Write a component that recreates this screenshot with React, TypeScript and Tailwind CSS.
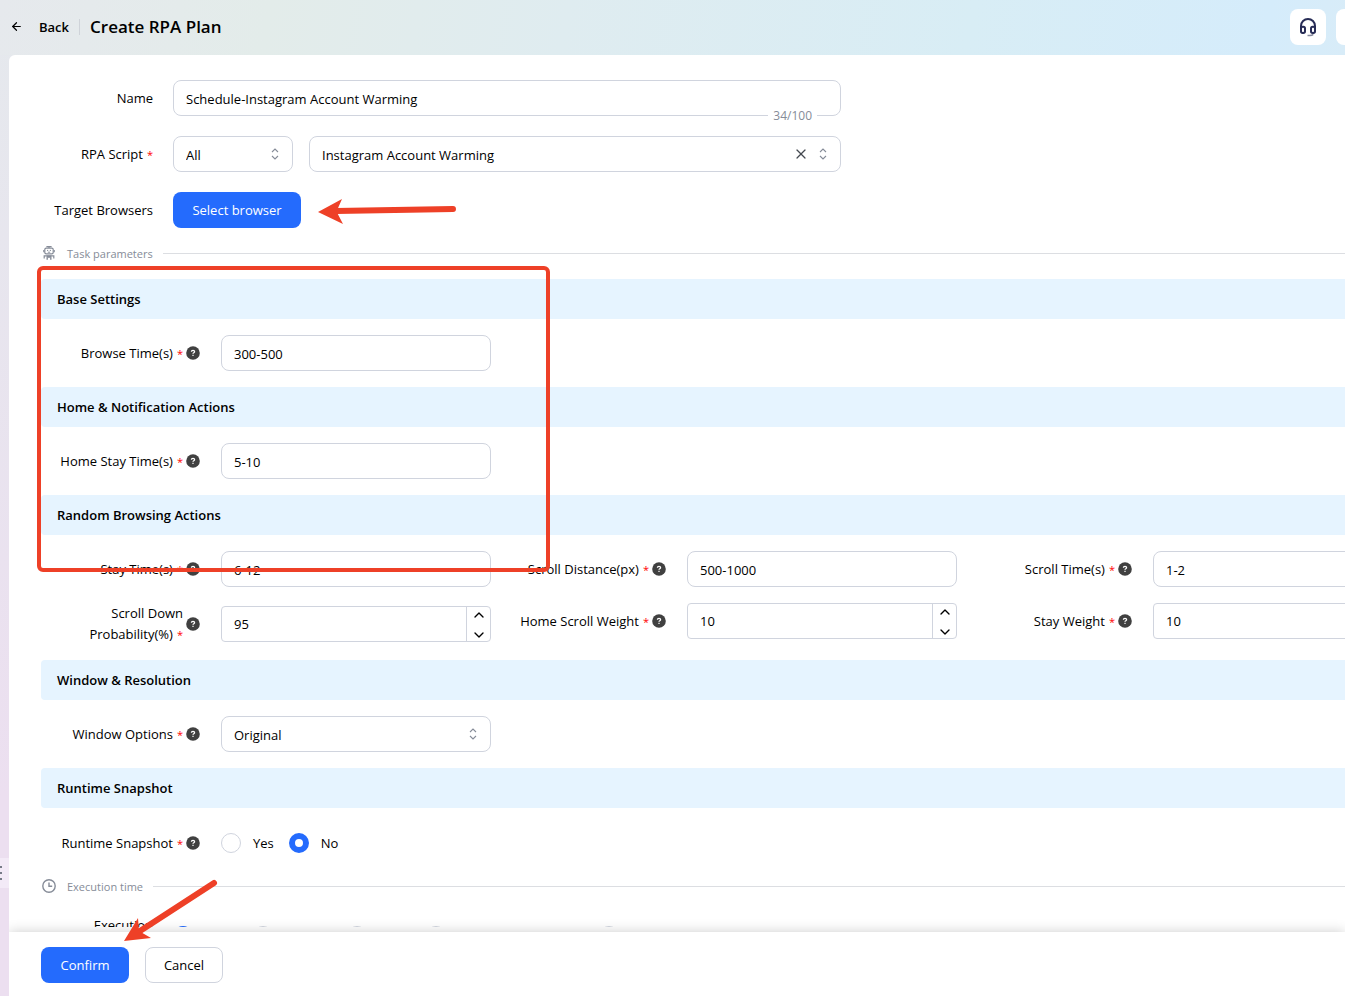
import { useState, type ReactNode } from 'react';
import { ArrowLeft, ChevronDown, ChevronUp, X } from 'lucide-react';

const inputClass =
  'h-9 rounded-lg border border-[#d0d4de] bg-white px-3 pt-px text-[13px] text-black outline-none focus:border-[#246bfd]';

function RobotIcon() {
  return (
    <svg viewBox="0 0 12 14" className="w-3 h-3.5" fill="none" stroke="#868c98" strokeWidth="1.2">
      <rect x="1.8" y="2.2" width="8.4" height="5.6" rx="1.4" />
      <path d="M6 2V.6M3.400.700h5.200M.800 4v2.200M11.200 4v2.200" />
      <path d="M4 4.400h1.200M6.800 4.400H8M4.800 6.200h2.400" strokeWidth="1" />
      <path d="M1.200 12.600V9.800h9.600v2.800" />
      <path d="M3.600 9.500h4.800v2.300H3.600z" fill="#868c98" stroke="none" />
      <path d="M4.200 11.500v2.300M7.800 11.500v2.300" strokeWidth="1.400" />
    </svg>
  );
}

function ClockIcon() {
  return (
    <svg viewBox="0 0 14 14" className="size-3.5" fill="none" stroke="#868c98" strokeWidth="1.4">
      <circle cx="7" cy="7" r="6.2" />
      <path d="M7 3.4v3.9h3.2" />
    </svg>
  );
}

function HeadsetIcon() {
  return (
    <svg viewBox="0 0 18 20" className="w-[18px] h-5" fill="none" stroke="#272c56" strokeWidth="2">
      <path d="M2 14V9a7 7 0 0 1 14 0v5" />
      <rect x="2" y="9.8" width="4" height="6.2" rx="1.7" />
      <rect x="12" y="9.8" width="4" height="6.2" rx="1.7" />
      <path d="M8.500 18.600h2.400c1.600 0 2.600-.5 3.400-1.200" stroke="#85889d" strokeWidth="1.5" />
    </svg>
  );
}

function SortArrows() {
  return (
    <svg viewBox="0 0 8 12" className="w-2 h-3 pointer-events-none" fill="none" stroke="#868c98" strokeWidth="1.1">
      <path d="M1 4 4 1l3 3M1 8l3 3 3-3" />
    </svg>
  );
}

function HelpIcon() {
  return (
    <svg viewBox="0 0 14 14" className="size-3.5 shrink-0">
      <circle cx="7" cy="7" r="6.8" fill="#404040" />
      <path d="M5.4 5.8c0-1.900 3.200-1.800 3.200-.1 0 1.100-1.600 1-1.600 2.100" fill="none" stroke="#fff" strokeWidth="1.3" />
      <path d="M6.400 8.700h1.200v1.200H6.400z" fill="#fff" />
    </svg>
  );
}

const Required = () => <span className="ml-1 text-[11px] text-[#ff0000]">*</span>;

function FormRow({ id, label, required, children }: { id: string; label: string; required?: boolean; children: ReactNode }) {
  return (
    <div className="flex items-center gap-5">
      <label htmlFor={id} className="w-28 shrink-0 text-right">
        {label}
        {required && <Required />}
      </label>
      {children}
    </div>
  );
}

function SectionDivider({ icon, title }: { icon: ReactNode; title: string }) {
  return (
    <div className="flex items-center h-4 text-[11px] text-[#868c98]">
      <span className="w-4 mr-2.5 flex justify-center">{icon}</span>
      <span className="pt-px">{title}</span>
      <span className="ml-2.5 flex-1 h-px bg-[#dcdee2]" />
    </div>
  );
}

function Section({ title, children }: { title: string; children: ReactNode }) {
  return (
    <section>
      <h2 className="h-10 px-4 flex items-center rounded-l-sm bg-[#e6f4ff] font-semibold">{title}</h2>
      <div className="py-4">{children}</div>
    </section>
  );
}

function Field({ id, label, children }: { id: string; label: string; children: ReactNode }) {
  return (
    <div className="flex items-center w-[450px] shrink-0">
      <label htmlFor={id} className="w-[142px] text-right leading-[21px]">
        {label}
        <Required />
      </label>
      <span className="ml-[3px] mr-[21px]">
        <HelpIcon />
      </span>
      {children}
    </div>
  );
}

function TextField({ id, label, value }: { id: string; label: string; value: string }) {
  return (
    <Field id={id} label={label}>
      <input id={id} defaultValue={value} className={`${inputClass} w-[270px]`} />
    </Field>
  );
}

function NumberField({ id, label, value }: { id: string; label: string; value: number }) {
  const [amount, setAmount] = useState(value);

  return (
    <Field id={id} label={label}>
      <div className="flex w-[270px] h-9 rounded border border-[#d0d4de] bg-white">
        <input
          id={id}
          value={amount}
          inputMode="numeric"
          onChange={(e) => setAmount(Number(e.target.value) || 0)}
          className="flex-1 min-w-0 px-3 text-[13px] outline-none"
        />
        <div className="w-6 flex flex-col border-l border-[#d0d4de]">
          <button aria-label="Increase" onClick={() => setAmount(amount + 1)} className="flex-1 flex items-center justify-center pb-0.5">
            <ChevronUp size={16} strokeWidth={2} />
          </button>
          <button aria-label="Decrease" onClick={() => setAmount(amount - 1)} className="flex-1 flex items-center justify-center pt-0.5">
            <ChevronDown size={16} strokeWidth={2} />
          </button>
        </div>
      </div>
    </Field>
  );
}

const radioClass =
  'block appearance-none size-5 shrink-0 rounded-full border border-[#d0d4de] bg-white checked:border-6 checked:border-[#246bfd]';

const schedules = [
  { name: 'Now', width: 'w-20' },
  { name: 'Once', width: 'w-[94px]' },
  { name: 'Daily', width: 'w-[79px]' },
  { name: 'Weekly', width: 'w-[173px]' },
  { name: 'Monthly', width: 'w-20' },
];

export default function App() {
  const [name, setName] = useState('Schedule-Instagram Account Warming');
  const [script, setScript] = useState('Instagram Account Warming');

  return (
    <div className="relative h-screen flex flex-col overflow-hidden bg-[linear-gradient(to_bottom,#e5e9ed,#ecdff0_80%)] font-['Open_Sans','Noto_Sans',sans-serif] text-[13px] leading-5 text-black">
      <header className="h-[55px] shrink-0 flex items-center pl-2.5 pb-0.5 bg-[linear-gradient(100deg,#e6e9ed_0%,#e3ecea_20%,#dfecf0_42%,#d8edf5_72%,#d5ecfb_94%,#d8ecf8_100%)]">
        <button className="flex items-center gap-4 font-semibold">
          <ArrowLeft size={13} strokeWidth={2.2} />
          Back
        </button>
        <span className="w-px h-4 mx-2.5 bg-[#cfd3d9]" />
        <h1 className="text-[17px] font-semibold">Create RPA Plan</h1>
        <div className="ml-auto -mr-[27px] flex gap-2.5">
          <button aria-label="Support" className="size-9 rounded-lg bg-white flex items-center justify-center">
            <HeadsetIcon />
          </button>
          <button aria-label="Notifications" className="size-9 rounded-lg bg-white" />
        </div>
      </header>

      <button
        aria-label="Toggle sidebar"
        className="absolute left-0 top-[858px] w-[9px] h-[30px] bg-[#f3eaf7] flex flex-col items-start justify-center gap-1"
      >
        <span className="w-0.5 h-0.5 bg-[#777b88]" />
        <span className="w-0.5 h-0.5 bg-[#777b88]" />
        <span className="w-0.5 h-0.5 bg-[#777b88]" />
      </button>

      <main className="flex-1 min-h-0 ml-[9px] flex flex-col overflow-hidden rounded-tl-md bg-white">
        <div className="flex-1 min-h-0 mb-[5px] pl-8 pt-[25px] overflow-hidden">
          <div className="flex flex-col gap-5">
            <FormRow id="name" label="Name">
              <div className="relative w-[668px]">
                <input
                  id="name"
                  value={name}
                  maxLength={100}
                  onChange={(e) => setName(e.target.value)}
                  className={`${inputClass} w-full`}
                />
                <span className="absolute right-6 -bottom-2.5 px-[5px] bg-white text-xs leading-5 text-[#868c98]">
                  {name.length}/100
                </span>
              </div>
            </FormRow>

            <FormRow id="script" label="RPA Script" required>
              <div className="flex w-[668px] gap-4">
                <div className="relative w-[120px]">
                  <select aria-label="Script group" className={`${inputClass} w-full appearance-none`}>
                    <option>All</option>
                  </select>
                  <span className="absolute right-3.5 top-3">
                    <SortArrows />
                  </span>
                </div>
                <div className="relative flex-1">
                  <select
                    id="script"
                    value={script}
                    onChange={(e) => setScript(e.target.value)}
                    className={`${inputClass} w-full appearance-none`}
                  >
                    <option value="" />
                    <option>Instagram Account Warming</option>
                  </select>
                  <button aria-label="Clear" onClick={() => setScript('')} className="absolute right-8 top-[10px]">
                    <X size={16} strokeWidth={1.8} className="text-[#444950]" />
                  </button>
                  <span className="absolute right-3.5 top-3">
                    <SortArrows />
                  </span>
                </div>
              </div>
            </FormRow>

            <FormRow id="browsers" label="Target Browsers">
              <button id="browsers" className="w-32 h-9 rounded-lg bg-[#246bfd] text-white">
                Select browser
              </button>
            </FormRow>
          </div>

          <div className="pt-[17px] pb-[18px]">
            <SectionDivider icon={<RobotIcon />} title="Task parameters" />
          </div>

          <Section title="Base Settings">
            <TextField id="browse-time" label="Browse Time(s)" value="300-500" />
          </Section>

          <Section title="Home & Notification Actions">
            <TextField id="home-stay" label="Home Stay Time(s)" value="5-10" />
          </Section>

          <Section title="Random Browsing Actions">
            <div className="flex flex-col gap-4 -mb-px">
              <div className="flex items-start gap-4">
                <TextField id="stay-time" label="Stay Time(s)" value="6-12" />
                <TextField id="scroll-distance" label="Scroll Distance(px)" value="500-1000" />
                <TextField id="scroll-time" label="Scroll Time(s)" value="1-2" />
              </div>
              <div className="flex items-start gap-4">
                <NumberField id="scroll-down" label="Scroll Down Probability(%)" value={95} />
                <NumberField id="home-scroll" label="Home Scroll Weight" value={10} />
                <NumberField id="stay-weight" label="Stay Weight" value={10} />
              </div>
            </div>
          </Section>

          <Section title="Window & Resolution">
            <Field id="window-options" label="Window Options">
              <div className="relative w-[270px]">
                <select id="window-options" className={`${inputClass} w-full appearance-none`}>
                  <option>Original</option>
                </select>
                <span className="absolute right-3.5 top-3">
                  <SortArrows />
                </span>
              </div>
            </Field>
          </Section>

          <Section title="Runtime Snapshot">
            <Field id="snapshot-no" label="Runtime Snapshot">
              <div className="flex items-center gap-[15px] h-[38px]">
                <label className="flex items-center gap-3">
                  <input type="radio" name="snapshot" className={radioClass} />
                  Yes
                </label>
                <label className="flex items-center gap-3">
                  <input id="snapshot-no" type="radio" name="snapshot" defaultChecked className={radioClass} />
                  No
                </label>
              </div>
            </Field>
          </Section>

          <SectionDivider icon={<ClockIcon />} title="Execution time" />

          <div className="flex items-start gap-5 pt-[21px]">
            <span className="w-28 text-right">Execution</span>
            <div className="flex pt-[11px]">
              {schedules.map((s, i) => (
                <span key={s.name} className={`${s.width} shrink-0`}>
                  <input type="radio" name="schedule" aria-label={s.name} defaultChecked={i === 0} className={radioClass} />
                </span>
              ))}
            </div>
          </div>
        </div>

        <footer className="relative h-16 shrink-0 flex items-center gap-4 px-8 pt-0.5 bg-white shadow-[0_0_12px_rgba(0,0,0,0.2)]">
          <button className="w-[88px] h-9 rounded-lg bg-[#246bfd] text-white">Confirm</button>
          <button className="w-[78px] h-9 rounded-lg border border-[#d0d4de] bg-white">Cancel</button>
        </footer>
      </main>

      {/* Guide marks over the form */}
      <div className="absolute left-[37px] top-[266px] w-[513px] h-[306px] rounded-md border-4 border-[#ee4027] pointer-events-none" />
      <svg className="absolute left-[316px] top-[196px] w-[142px] h-[30px] pointer-events-none" viewBox="0 0 142 30">
        <path d="M20 15 137 13" stroke="#ee4027" strokeWidth="6" strokeLinecap="round" />
        <path d="M2 16 26 3 20.500 15.500 27 28z" fill="#ee4027" />
      </svg>
      <svg className="absolute left-[120px] top-[876px] w-[100px] h-[70px] pointer-events-none" viewBox="0 0 100 70">
        <path d="M20 55 94 7" stroke="#ee4027" strokeWidth="6" strokeLinecap="round" />
        <path d="M4 65 18 42 19 55 31 62z" fill="#ee4027" />
      </svg>
    </div>
  );
}
